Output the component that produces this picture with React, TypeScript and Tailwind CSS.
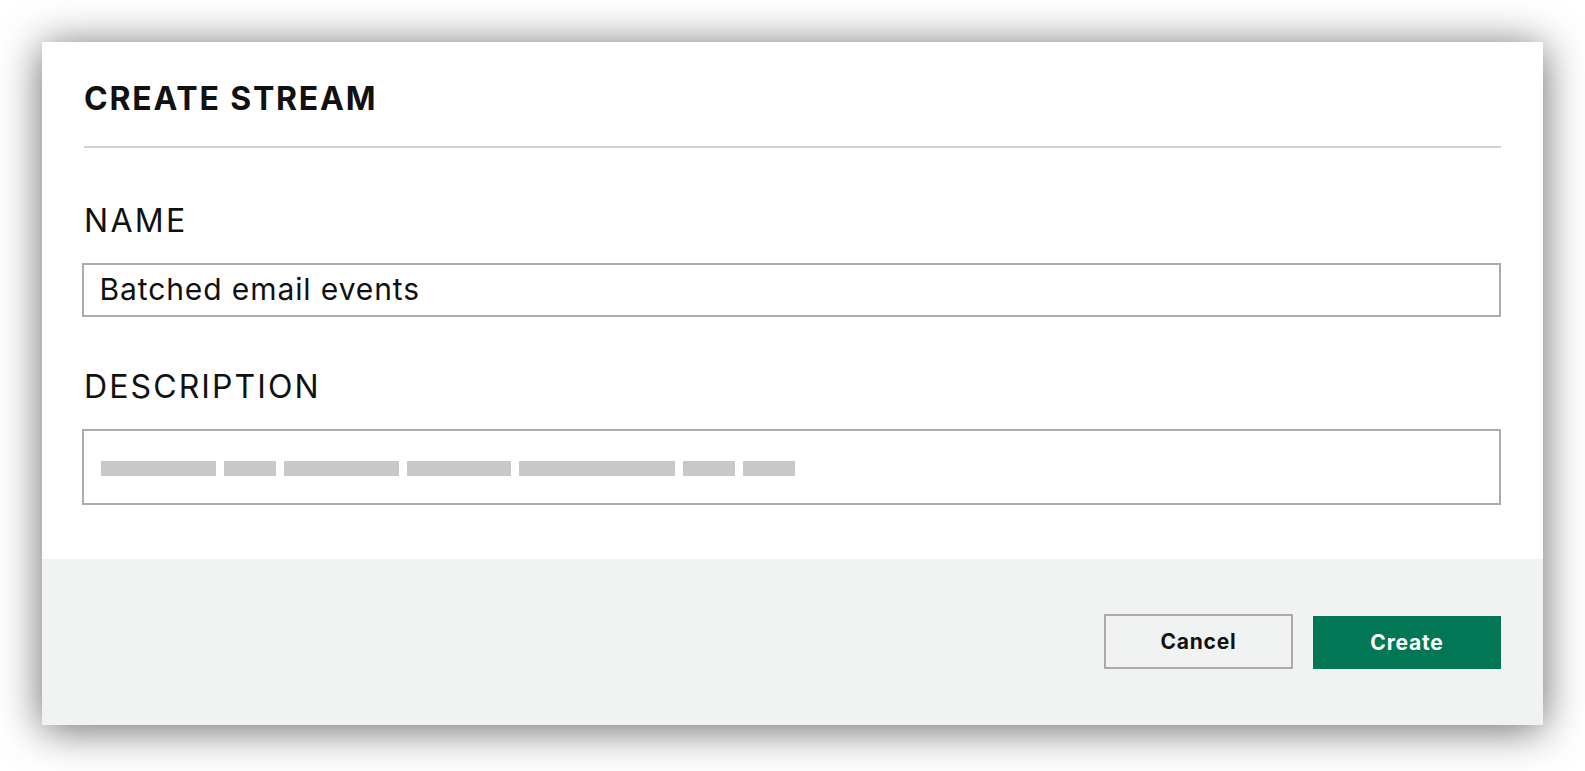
import React from "react";

const bars = [115, 52, 115, 104, 156, 52, 52];

export default function App() {
  return (
    <div
      className="min-h-screen w-full bg-white pt-[42px] px-[42px]"
      style={{ fontFamily: "Inter, 'Open Sans', sans-serif" }}
    >
      <div className="w-[1501px] bg-white shadow-[0_4px_40px_rgba(0,0,0,0.6)] flex flex-col">
        <div className="px-[42px] h-[517px] flex flex-col">
          <h1 className="mt-[41px] text-[32px] leading-[32px] font-bold text-[#111] tracking-[1.8px]">
            CREATE STREAM
          </h1>
          <div className="mt-[31px] h-[1.5px] bg-[#d2d2d2]" />
          <div className="mt-[57px] text-[32px] leading-[32px] text-[#111] tracking-[2.3px]">NAME</div>
          <div className="mt-[26px] -ml-[2.5px] h-[54px] border-2 border-[#ababab] flex items-center pl-[16px] text-[30px] text-[#111] tracking-[0.9px]">
            Batched email events
          </div>
          <div className="mt-[54px] text-[32px] leading-[32px] text-[#111] tracking-[2.1px]">DESCRIPTION</div>
          <div className="mt-[26px] -ml-[2.5px] h-[76px] border-2 border-[#ababab] pt-[30px] pl-[17px] flex gap-[8px] items-start">
            {bars.map((w, i) => (
              <div key={i} className="h-[15px] bg-[#c8c8c8]" style={{ width: w }} />
            ))}
          </div>
        </div>
        <div className="h-[166px] bg-[#f1f3f2] flex justify-end items-start pt-[55px] pr-[42px] gap-[20px]">
          <button className="w-[189px] h-[55px] border-2 border-[#ababab] bg-transparent text-[21px] font-bold text-[#111] tracking-[0.8px]">
            Cancel
          </button>
          <button className="mt-[1.5px] w-[188px] h-[53px] bg-[#017756] text-[21px] font-bold text-white tracking-[0.8px] pt-[2px]">
            Create
          </button>
        </div>
      </div>
    </div>
  );
}
